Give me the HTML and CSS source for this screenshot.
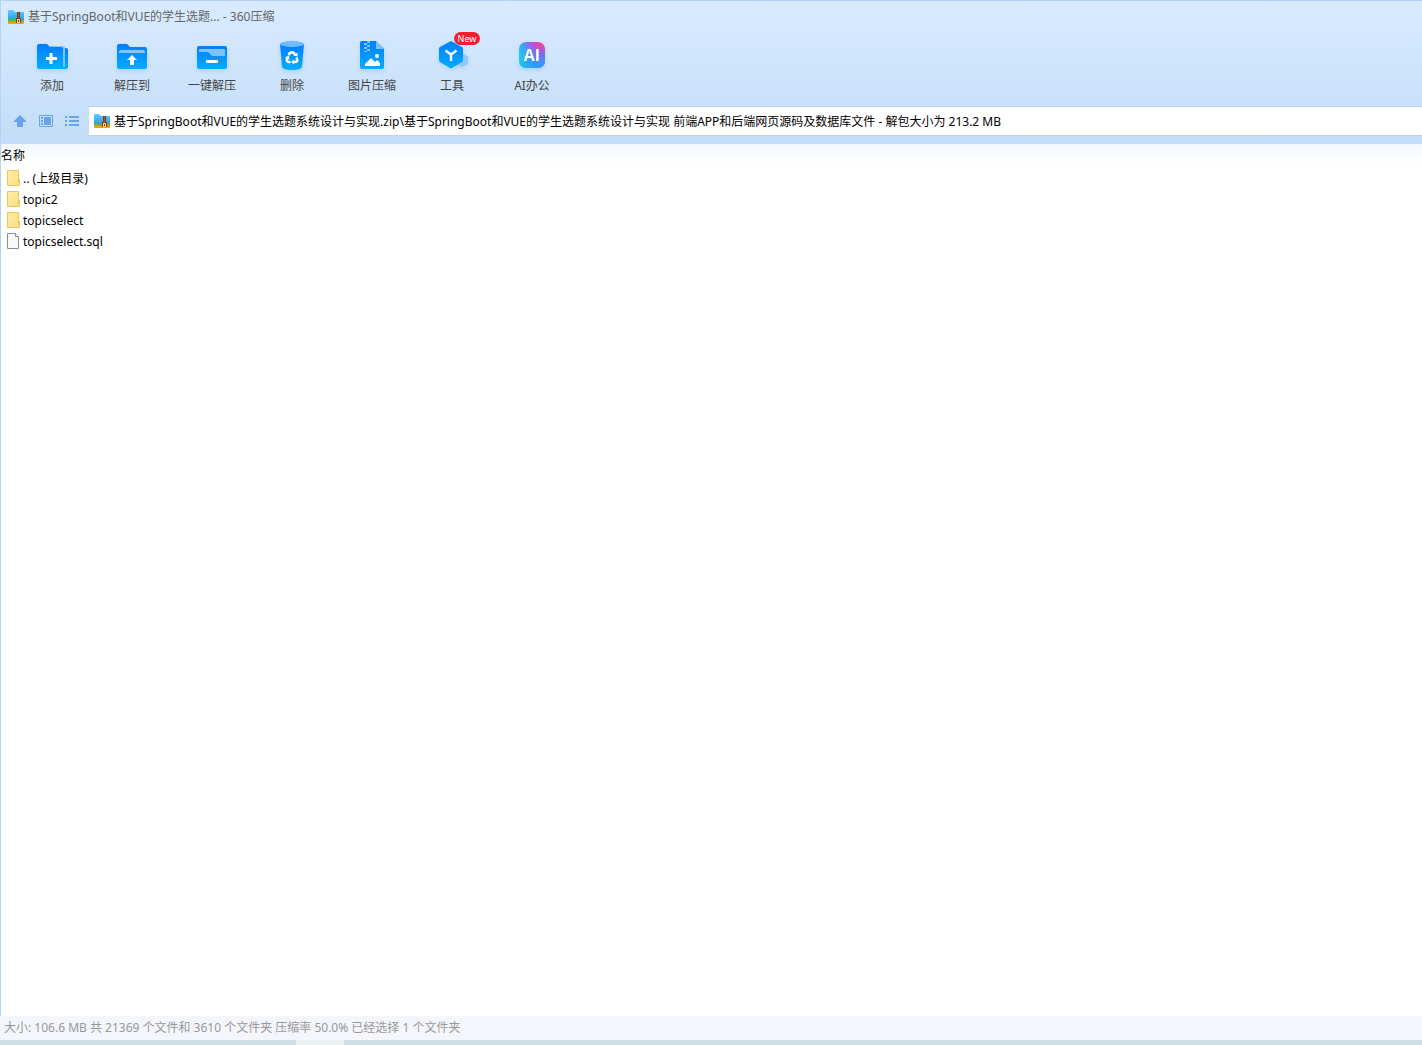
FILE: index.html
```
<!DOCTYPE html>
<html lang="zh-CN">
<head>
    <meta charset="UTF-8">
    <meta name="viewport" content="width=device-width, initial-scale=1.0">
    <title>360压缩</title>
    <link rel="stylesheet" href="styles.css">
</head>
<body>
    <!-- shared gradients and symbols -->
    <svg class="defs" width="0" height="0" aria-hidden="true">
        <defs>
            <linearGradient id="blue" x1="0" y1="0" x2="0" y2="1">
                <stop offset="0" stop-color="#027dff"/>
                <stop offset="1" stop-color="#02adff"/>
            </linearGradient>
            <linearGradient id="zip-blue" x1="0" y1="0" x2="0" y2="1">
                <stop offset="0" stop-color="#62cdfb"/>
                <stop offset="1" stop-color="#2497ee"/>
            </linearGradient>
            <linearGradient id="yellow" x1="0" y1="0" x2="1" y2="1">
                <stop offset="0" stop-color="#ffeca6"/>
                <stop offset="1" stop-color="#fbdf82"/>
            </linearGradient>
            <linearGradient id="ai" x1="0" y1="0.7" x2="1" y2="0.1">
                <stop offset="0" stop-color="#16e0e8"/>
                <stop offset="0.35" stop-color="#3aa4f6"/>
                <stop offset="0.6" stop-color="#a65cf0"/>
                <stop offset="0.85" stop-color="#f13cab"/>
                <stop offset="1" stop-color="#ff4d70"/>
            </linearGradient>
            <linearGradient id="ai-corner" x1="0.4" y1="0.3" x2="0.8" y2="1">
                <stop offset="0" stop-color="#2c8cff" stop-opacity="0"/>
                <stop offset="1" stop-color="#2c9cff"/>
            </linearGradient>
        </defs>
        <symbol id="zip" viewBox="0 0 16 14">
            <path d="M0 1q0-1 1-1h4l2 2h8q1 0 1 1v8H0z" fill="url(#zip-blue)"/>
            <path d="M0 10h16v2H0z" fill="#68bd3f"/>
            <path d="M0 12h16v1q0 1-1 1H1q-1 0-1-1z" fill="#ff9b16"/>
            <path d="M9 2h3v7H9z" fill="#803b19"/>
            <path d="M10 3h1v1h-1zM10 5h1v1h-1zM10 7h1v1h-1z" fill="#b8733c"/>
            <path d="M8 8h5v5H8z" fill="#803b19"/>
            <path d="M9 9h3v4H9z" fill="#ffd885"/>
            <path d="M10 10h1v2h-1z" fill="#803b19"/>
        </symbol>
        <symbol id="folder" viewBox="0 0 14 16">
            <path d="M.5.500h11v9h1v6H.5z" fill="url(#yellow)" stroke="#edc757"/>
            <path d="M11.500 9.500v3" stroke="#e8c252"/>
        </symbol>
    </svg>

    <div class="window">
        <header class="top">
            <div class="title-bar">
                <svg class="zip-icon" aria-hidden="true"><use href="#zip"/></svg>
                <h1 class="title">基于SpringBoot和VUE的学生选题... - 360压缩</h1>
            </div>

            <div class="toolbar">
                <button type="button" class="tool">
                    <svg class="tool-icon" viewBox="0 0 34 34" aria-hidden="true">
                        <path d="M4 8h27q2 0 2 2v17q0 2-2 2H4z" fill="url(#blue)"/>
                        <path d="M15 6h13q2 0 2 2v19h-2V8H15z" fill="#80c2ff"/>
                        <path d="M2 6q0-2 2-2h8l3 3h11q2 0 2 2v20H4q-2 0-2-2z" fill="url(#blue)"/>
                        <path d="M16 13v11M11 18.500h11" stroke="#fff" stroke-width="3"/>
                    </svg>
                    <span>添加</span>
                </button>
                <button type="button" class="tool">
                    <svg class="tool-icon" viewBox="0 0 34 34" aria-hidden="true">
                        <path d="M2 6q0-2 2-2h8l3 3h15q2 0 2 2v18q0 2-2 2H4q-2 0-2-2z" fill="url(#blue)"/>
                        <path d="M4 13v-1q0-2 2-2h22q2 0 2 2v1z" fill="#80c6ff"/>
                        <path d="M17 15l5 5h-3v5h-4v-5h-3z" fill="#fff"/>
                    </svg>
                    <span>解压到</span>
                </button>
                <button type="button" class="tool">
                    <svg class="tool-icon" viewBox="0 0 34 34" aria-hidden="true">
                        <rect x="2" y="6" width="30" height="23" rx="2" fill="url(#blue)"/>
                        <path d="M4 10q0-1 1-1h24q1 0 1 1v6H18q-2 0-3-2t-3-2H4z" fill="#80c2ff"/>
                        <rect x="11" y="20" width="12" height="3" rx="1" fill="#fff"/>
                    </svg>
                    <span>一键解压</span>
                </button>
                <button type="button" class="tool">
                    <svg class="tool-icon" viewBox="0 0 34 34" aria-hidden="true">
                        <path d="M5 4h24l-2 23q-1 3-10 3T7 27z" fill="url(#blue)"/>
                        <ellipse cx="17" cy="4" rx="12" ry="3" fill="#70bcff"/>
                        <g fill="none" stroke="#fff" stroke-width="2.600">
                            <path d="M13.500 15l1.500-2q2-1.500 4 0l1 2"/>
                            <path d="M21.500 17.500l.5 1.500q1 3-2 3h-2"/>
                            <path d="M15.500 22H14q-3-.5-2-3l1-1.500"/>
                        </g>
                        <path d="M22.500 12.500v4l-4-1zM19 19.500v5l-3-2.500zM10 17.500l4-2 .5 4z" fill="#fff"/>
                    </svg>
                    <span>删除</span>
                </button>
                <button type="button" class="tool">
                    <svg class="tool-icon" viewBox="0 0 34 34" aria-hidden="true">
                        <path d="M5 3q0-2 2-2h14l8 8v18q0 2-2 2H7q-2 0-2-2z" fill="url(#blue)"/>
                        <path d="M21 1l8 8h-8z" fill="#80c2ff"/>
                        <path d="M12 1h3v2h-3zM9 3h3v2H9zM12 5h3v2h-3zM9 7h3v2H9zM12 9h3v2h-3zM9 11h3v1H9z" fill="#80c6ff"/>
                        <circle cx="22" cy="16" r="2" fill="#fff"/>
                        <path d="M10 26v-2l6-6 4 4 2-2 3 3v3z" fill="#fff"/>
                    </svg>
                    <span>图片压缩</span>
                </button>
                <button type="button" class="tool">
                    <svg class="tool-icon" viewBox="0 0 34 34" aria-hidden="true">
                        <path d="M27 13l6 3.500v7L27 27l-6-3.500v-7z" fill="#91c8fc"/>
                        <path d="M15 1.500q1-.5 2 0l10 5.500q1 .5 1 2v11q0 1.500-1 2l-10 6q-1 .5-2 0L5 22q-1-.5-1-2V9q0-1.500 1-2z" fill="url(#blue)"/>
                        <path d="M10.500 10.500l5.500 4 5.500-4M16 14.500V21" fill="none" stroke="#fff" stroke-width="2.400"/>
                    </svg>
                    <span>工具</span>
                    <span class="badge">New</span>
                </button>
                <button type="button" class="tool">
                    <svg class="tool-icon" viewBox="0 0 34 34" aria-hidden="true">
                        <rect x="4" y="2" width="26" height="26" rx="7" fill="url(#ai)"/>
                        <rect x="4" y="2" width="26" height="26" rx="7" fill="url(#ai-corner)"/>
                        <text x="17" y="21" class="ai-text" text-anchor="middle">AI</text>
                    </svg>
                    <span>AI办公</span>
                </button>
            </div>

            <div class="address-row">
                <button type="button" class="nav-btn" aria-label="向上">
                    <svg width="14" height="14" viewBox="0 0 14 14" aria-hidden="true">
                        <path d="M7 1l7 7h-4v5H4V8H0z" fill="#69a2ed"/>
                    </svg>
                </button>
                <button type="button" class="nav-btn" aria-label="预览">
                    <svg width="14" height="14" viewBox="0 0 14 14" aria-hidden="true">
                        <path d="M.5 1.500h13v11H.5z" fill="none" stroke="#69a2ed"/>
                        <path d="M2 3h2v2H2zM2 6h2v2H2zM2 9h2v2H2zM5 3h7v8H5z" fill="#69a2ed"/>
                    </svg>
                </button>
                <button type="button" class="nav-btn" aria-label="列表">
                    <svg width="14" height="14" viewBox="0 0 14 14" aria-hidden="true">
                        <path d="M0 2h2v2H0zM4 2h10v2H4zM0 6h2v2H0zM4 6h10v2H4zM0 10h2v2H0zM4 10h10v2H4z" fill="#69a2ed"/>
                    </svg>
                </button>
                <div class="address">
                    <svg class="zip-icon" aria-hidden="true"><use href="#zip"/></svg>
                    <input type="text" class="path" aria-label="路径" value="基于SpringBoot和VUE的学生选题系统设计与实现.zip\基于SpringBoot和VUE的学生选题系统设计与实现 前端APP和后端网页源码及数据库文件 - 解包大小为 213.2 MB">
                </div>
            </div>
        </header>

        <main class="content">
            <table class="files">
                <thead>
                    <tr><th>名称</th></tr>
                </thead>
                <tbody>
                    <tr><td><div class="file"><svg class="file-icon" aria-hidden="true"><use href="#folder"/></svg><span>.. (上级目录)</span></div></td></tr>
                    <tr><td><div class="file"><svg class="file-icon" aria-hidden="true"><use href="#folder"/></svg><span>topic2</span></div></td></tr>
                    <tr><td><div class="file"><svg class="file-icon" aria-hidden="true"><use href="#folder"/></svg><span>topicselect</span></div></td></tr>
                    <tr><td><div class="file">
                        <svg class="file-icon" viewBox="0 0 14 16" aria-hidden="true">
                            <path d="M.5.500h8l3 3v12H.5z" fill="#f8f8f8" stroke="#8c8c8c"/>
                            <path d="M8.500.500v3h3" fill="#fff" stroke="#8c8c8c"/>
                        </svg>
                        <span>topicselect.sql</span>
                    </div></td></tr>
                </tbody>
            </table>
        </main>

        <footer class="status">大小: 106.6 MB 共 21369 个文件和 3610 个文件夹 压缩率 50.0% 已经选择 1 个文件夹</footer>
        <div class="taskbar"><div class="task-active"></div></div>
    </div>
</body>
</html>
```
FILE: styles.css
```
body {
    margin: 0;
    font-family: "Noto Sans", "Noto Sans CJK SC", sans-serif;
    font-size: 12px;
    line-height: 20px;
    color: #000;
}
button, input {
    font: inherit;
    border: 0;
    padding: 0;
    background: none;
}
.defs {
    position: absolute;
}
.window {
    display: flex;
    flex-direction: column;
    height: 100vh;
}

/* title, toolbar and address */
.top {
    box-sizing: border-box;
    border-top: 1px solid #b5d3f2;
    border-left: 1px solid #b5d3f2;
    padding-bottom: 8px;
    background: linear-gradient(#d8ebff, #c3ddf8);
}
.title-bar {
    display: flex;
    align-items: center;
    gap: 4px;
    height: 31px;
    padding-left: 7px;
}
.zip-icon {
    flex: none;
    width: 16px;
    height: 14px;
}
.title {
    margin: 0;
    font-size: 12px;
    font-weight: normal;
    color: #666;
}
.toolbar {
    display: flex;
    height: 74px;
    padding-left: 11px;
}
.tool {
    position: relative;
    display: flex;
    flex-direction: column;
    align-items: center;
    width: 80px;
    padding-top: 8px;
    color: #444;
    white-space: nowrap;
}
.tool-icon {
    width: 34px;
    height: 34px;
    margin-bottom: 2px;
    overflow: visible;
    filter: drop-shadow(0 2px 2px rgba(0, 110, 220, 0.15));
}
.ai-text {
    font-family: "Open Sans", sans-serif;
    font-size: 16px;
    font-weight: bold;
    fill: #fff;
}
.badge {
    position: absolute;
    top: 0;
    left: 42px;
    width: 26px;
    height: 13px;
    border-radius: 7px;
    background: #f51d2e;
    color: #fff;
    font-size: 9px;
    line-height: 13px;
}
.address-row {
    display: flex;
    align-items: center;
    padding-left: 6px;
}
.nav-btn {
    display: flex;
    justify-content: center;
    width: 26px;
}
.address {
    display: flex;
    flex: 1;
    align-items: center;
    gap: 4px;
    height: 28px;
    margin-left: 4px;
    padding-left: 5px;
    border: 1px solid #b9d5f2;
    border-width: 1px 0 1px 0;
    background: #fff;
}
.path {
    flex: 1;
    min-width: 0;
    height: 20px;
    padding-top: 2px;
    outline: 0;
}

/* file list */
.content {
    flex: 1;
    border-left: 1px solid #b5d0f2;
    background: #fff;
}
.files {
    width: 100%;
    border-collapse: collapse;
}
.files th {
    height: 23px;
    padding: 0;
    font-weight: normal;
    text-align: left;
    background: linear-gradient(#f3f8fe, #fff);
}
.files td {
    height: 21px;
    padding: 0 0 0 6px;
}
.file {
    display: flex;
    align-items: center;
    gap: 2px;
    height: 21px;
}
.file span {
    padding-top: 2px;
}
.file-icon {
    flex: none;
    width: 14px;
    height: 16px;
}

/* bottom */
.status {
    height: 24px;
    padding-left: 4px;
    line-height: 24px;
    color: #999;
    background: #f4f6fb;
}
.taskbar {
    display: flex;
    height: 5px;
    padding-left: 296px;
    background: #cddfe3;
}
.task-active {
    width: 48px;
    background: #e9f1f3;
}
```
